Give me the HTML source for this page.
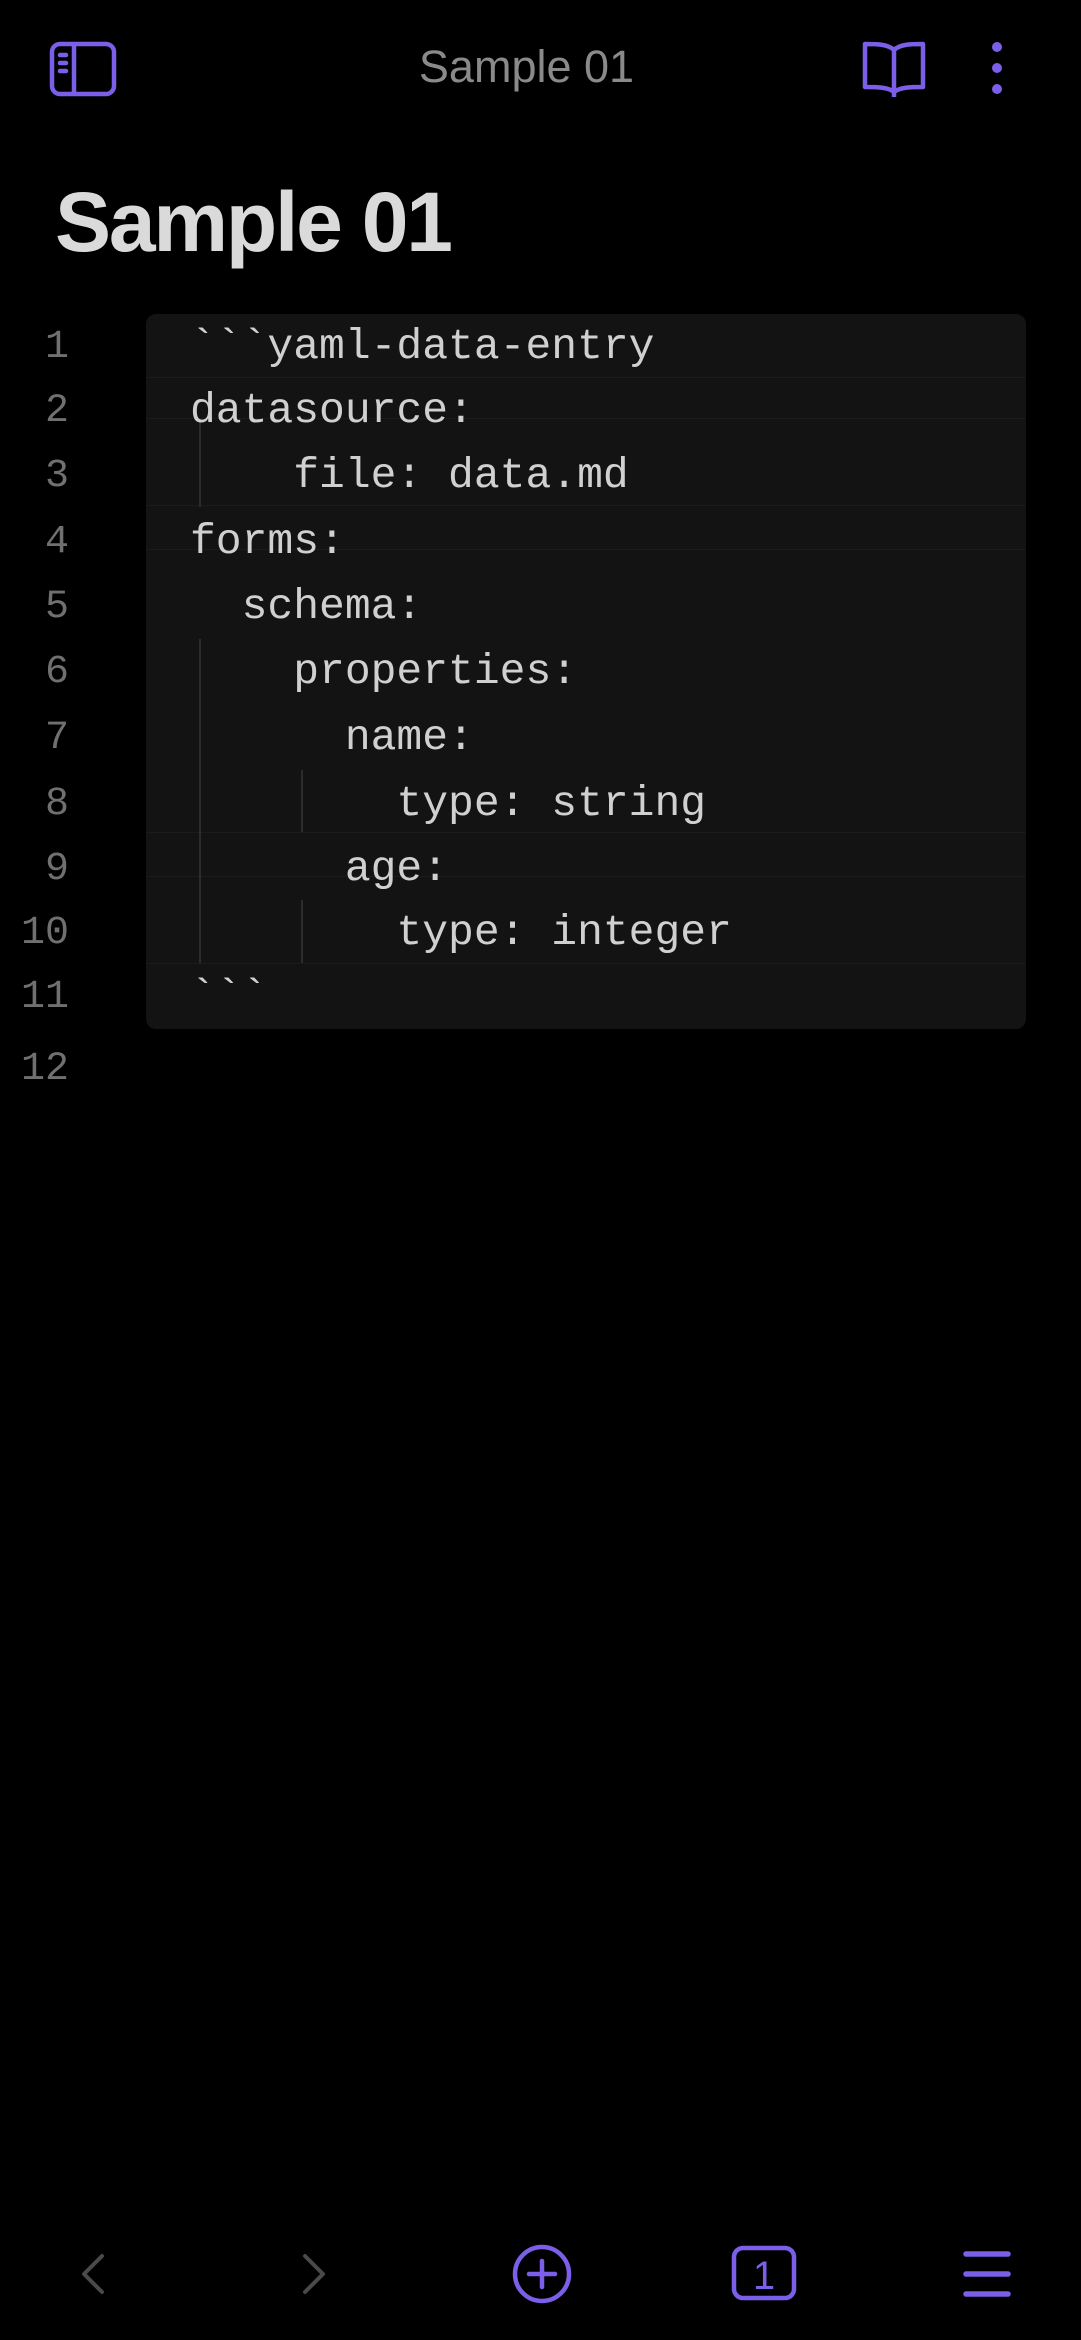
<!DOCTYPE html>
<html><head><meta charset="utf-8"><style>
html,body{margin:0;padding:0;background:#000;width:1081px;height:2340px;overflow:hidden;font-family:"Liberation Sans",sans-serif;}
.abs{position:absolute}
.title{left:0;width:1053px;text-align:center;top:41px;font-size:45px;color:#8a8a8a;}
.h1{left:55px;top:174px;font-size:84px;font-weight:bold;color:#dadada;letter-spacing:-2.2px;}
.block{left:146px;top:314px;width:880px;height:715px;background:#131313;border-radius:10px;}
.ln{position:absolute;left:0;width:69px;text-align:right;font-family:"Liberation Mono",monospace;font-size:40px;color:#707070;margin-top:4px;}
.code{position:absolute;left:190px;font-family:"Liberation Mono",monospace;font-size:43px;color:#d0d0d0;white-space:pre;margin-top:4px;}
.guide{position:absolute;width:2px;background:#2c2c2c;}
.sep{position:absolute;left:146px;width:880px;height:1px;background:#1b1b1b;}
</style></head><body>
<svg class="abs" style="left:48px;top:40px" width="70" height="58" viewBox="0 0 70 58" fill="none" stroke="#7b5fe8" stroke-width="4.5">
<rect x="4" y="4" width="62" height="50" rx="8"/><line x1="26" y1="4" x2="26" y2="54"/>
<line x1="12" y1="15" x2="18" y2="15" stroke-linecap="round"/><line x1="12" y1="23" x2="18" y2="23" stroke-linecap="round"/><line x1="12" y1="31" x2="18" y2="31" stroke-linecap="round"/>
</svg>
<div class="abs title">Sample 01</div>
<svg class="abs" style="left:860px;top:40px" width="68" height="60" viewBox="0 0 68 60" fill="none" stroke="#7b5fe8" stroke-width="4.5" stroke-linejoin="round">
<path d="M34 10 L34 52 M34 10 C28 4 16 4 5 4 L5 47 C16 47 28 47 34 52 C40 47 52 47 63 47 L63 4 C52 4 40 4 34 10 Z"/><path d="M34 52 L34 57"/>
</svg>
<svg class="abs" style="left:985px;top:40px" width="24" height="58"><circle cx="12" cy="7" r="5" fill="#7b5fe8"/><circle cx="12" cy="28" r="5" fill="#7b5fe8"/><circle cx="12" cy="49" r="5" fill="#7b5fe8"/></svg>
<div class="abs h1">Sample 01</div>
<div class="abs block"></div>
<div class="sep" style="top:377px"></div><div class="sep" style="top:418px"></div><div class="sep" style="top:505px"></div><div class="sep" style="top:549px"></div><div class="sep" style="top:832px"></div><div class="sep" style="top:876px"></div><div class="sep" style="top:963px"></div>
<div class="guide" style="left:199px;top:422px;height:85px"></div>
<div class="guide" style="left:199px;top:639px;height:324px"></div>
<div class="guide" style="left:301px;top:770px;height:62px"></div>
<div class="guide" style="left:301px;top:900px;height:63px"></div>
<div class="ln" style="top:321px">1</div><div class="code" style="top:318px">&#96;&#96;&#96;yaml-data-entry</div>
<div class="ln" style="top:385px">2</div><div class="code" style="top:382px">datasource:</div>
<div class="ln" style="top:450px">3</div><div class="code" style="top:447px">    file: data.md</div>
<div class="ln" style="top:516px">4</div><div class="code" style="top:513px">forms:</div>
<div class="ln" style="top:581px">5</div><div class="code" style="top:578px">  schema:</div>
<div class="ln" style="top:646px">6</div><div class="code" style="top:643px">    properties:</div>
<div class="ln" style="top:712px">7</div><div class="code" style="top:709px">      name:</div>
<div class="ln" style="top:778px">8</div><div class="code" style="top:775px">        type: string</div>
<div class="ln" style="top:843px">9</div><div class="code" style="top:840px">      age:</div>
<div class="ln" style="top:907px">10</div><div class="code" style="top:904px">        type: integer</div>
<div class="ln" style="top:971px">11</div><div class="code" style="top:968px">&#96;&#96;&#96;</div>
<div class="ln" style="top:1043px">12</div>
<svg class="abs" style="left:0;top:2240px" width="1081" height="70" fill="none" stroke-linecap="round" stroke-linejoin="round">
<path d="M102 16 L84 34 L102 52" stroke="#4a4a4a" stroke-width="4"/>
<path d="M305 16 L323 34 L305 52" stroke="#4a4a4a" stroke-width="4"/>
<circle cx="542" cy="34" r="27" stroke="#7b5fe8" stroke-width="4.5"/>
<path d="M542 21 V47 M529 34 H555" stroke="#7b5fe8" stroke-width="4.5"/>
<rect x="734" y="8" width="60" height="50" rx="9" stroke="#7b5fe8" stroke-width="4.5"/>
<line x1="966" y1="14" x2="1008" y2="14" stroke="#7b5fe8" stroke-width="5.5"/>
<line x1="966" y1="34" x2="1008" y2="34" stroke="#7b5fe8" stroke-width="5.5"/>
<line x1="966" y1="54" x2="1008" y2="54" stroke="#7b5fe8" stroke-width="5.5"/>
<text x="764" y="49" text-anchor="middle" font-family="Liberation Sans" font-size="40" fill="#7b5fe8" stroke="none">1</text>
</svg>
</body></html>
